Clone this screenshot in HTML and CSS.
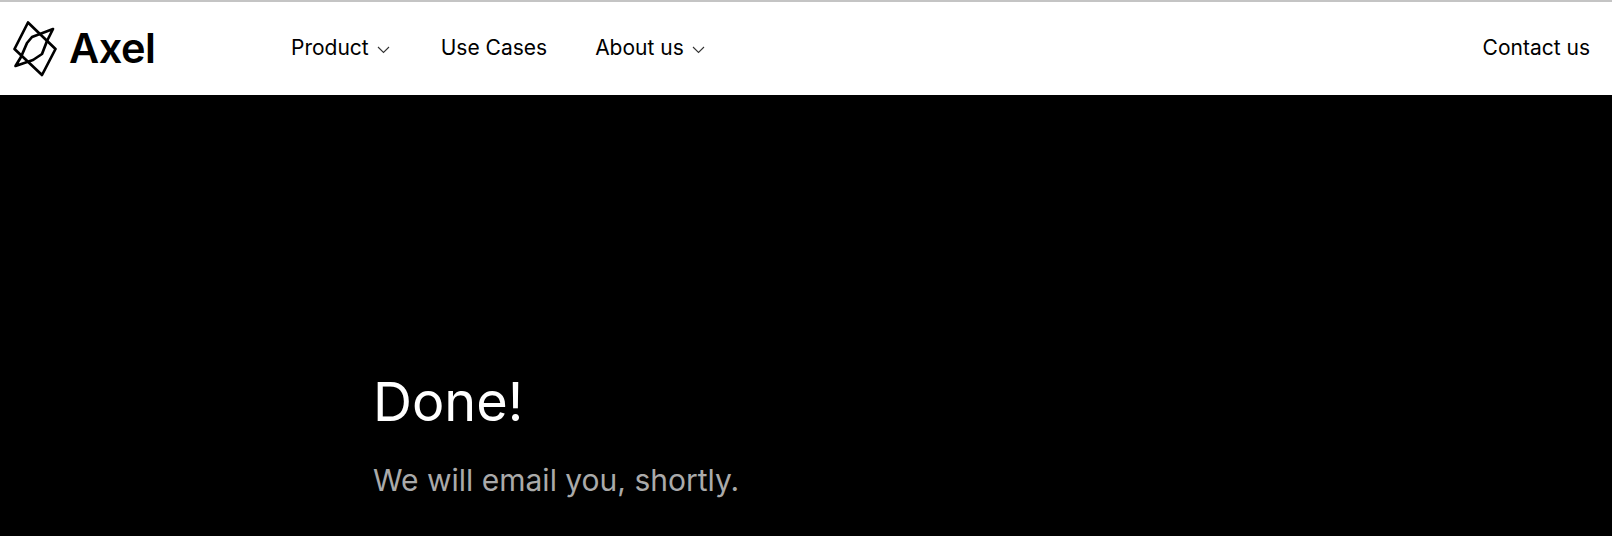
FILE: index.html
```html
<!DOCTYPE html>
<html lang="en">
<head>
<meta charset="utf-8">
<title>Axel</title>
<link rel="stylesheet" href="styles.css">
</head>
<body>
<header class="topbar">
  <a class="brand" href="#">
    <svg class="brand-mark" width="44" height="56" viewBox="0 0 44 56" fill="none" stroke="#000" stroke-width="2.7" stroke-linejoin="round" stroke-linecap="round">
      <path d="M15 1.5 L42.5 28 L29 54 L1.5 28 Z"/>
      <path d="M40 8 L19 16 L14 22 L8 36 L2.5 45 L20 39 L29 33 L34 20 Z"/>
    </svg>
    <span class="brand-name">Axel</span>
  </a>
  <nav class="nav">
    <a class="nav-item" href="#">Product <svg class="chev" width="16" height="8" viewBox="0 0 16 8" fill="none" stroke="#333" stroke-width="1.1"><path d="M1 1 L6.5 6.5 L12 1"/></svg></a>
    <a class="nav-item" href="#">Use Cases</a>
    <a class="nav-item" href="#">About us <svg class="chev" width="16" height="8" viewBox="0 0 16 8" fill="none" stroke="#333" stroke-width="1.1"><path d="M1 1 L6.5 6.5 L12 1"/></svg></a>
  </nav>
  <a class="contact" href="#">Contact us</a>
</header>
<main class="hero">
  <h1 class="hero-title">Done!</h1>
  <p class="hero-sub">We will email you, shortly.</p>
</main>
</body>
</html>
```
FILE: styles.css
```css
* { box-sizing: border-box; }
html, body { margin: 0; height: 100%; overflow: hidden; }
body {
  font-family: Inter, "Liberation Sans", sans-serif;
  background: #000;
  display: flex;
  flex-direction: column;
}
a { color: inherit; text-decoration: none; }
.topbar {
  height: 95px;
  flex: none;
  background: #fff;
  color: #000;
  border-top: 2px solid #c4c4c4;
  display: flex;
  align-items: center;
  padding: 0 22px 0 13px;
}
.brand { display: flex; align-items: center; gap: 12px; width: 278px; }
.brand-mark { display: block; }
.brand-name { font-size: 41.5px; font-weight: 600; letter-spacing: -0.5px; line-height: 1; }
.nav { display: flex; gap: 48px; font-size: 21px; flex: 1; margin-bottom: 2px; }
.nav-item { display: flex; align-items: center; gap: 8px; white-space: nowrap; }
.chev { margin-top: 4px; }
.contact { font-size: 21px; margin-bottom: 2px; }
.hero { flex: 1; padding: 273px 0 0 373px; color: #fff; }
.hero-title { margin: 0; font-size: 54px; font-weight: 400; line-height: 68px; }
.hero-sub { margin: 24px 0 0; font-size: 30px; line-height: 40px; color: #aaa; }
```
